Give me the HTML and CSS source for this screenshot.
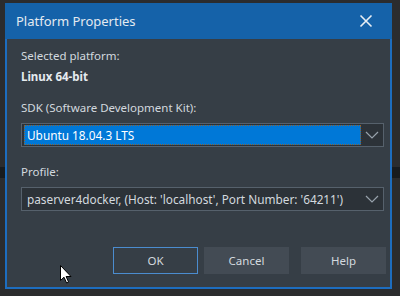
FILE: index.html
```html
<html>
  <head>
    <link rel="stylesheet" href="styles.css">
  </head>
  <body>
    <div class="dialog">
      <div class="titlebar">
        <span class="title">Platform Properties</span>
        <svg class="close" width="14" height="14" viewBox="0 0 14 14">
          <path d="M1.5 1.5 L12.5 12.5 M12.5 1.5 L1.5 12.5" stroke="#e8eef4" stroke-width="1.6" fill="none"/>
        </svg>
      </div>
      <div class="content">
        <div class="label">Selected platform:</div>
        <div class="value">Linux 64-bit</div>

        <div class="label sdk-label">SDK (Software Development Kit):</div>
        <div class="combo">
          <div class="combo-text selected">Ubuntu 18.04.3 LTS</div>
          <div class="combo-arrow">
            <svg width="14" height="8" viewBox="0 0 14 8"><path d="M1 1 L7 7 L13 1" stroke="#98a2ac" stroke-width="1.2" fill="none"/></svg>
          </div>
        </div>

        <div class="label profile-label">Profile:</div>
        <div class="combo">
          <div class="combo-text">paserver4docker, (Host: 'localhost', Port Number: '64211')</div>
          <div class="combo-arrow">
            <svg width="14" height="8" viewBox="0 0 14 8"><path d="M1 1 L7 7 L13 1" stroke="#98a2ac" stroke-width="1.2" fill="none"/></svg>
          </div>
        </div>

        <div class="buttons">
          <button class="btn default">OK</button>
          <button class="btn">Cancel</button>
          <button class="btn help">Help</button>
        </div>
      </div>
    </div>

    <svg class="cursor" width="12" height="19" viewBox="0 0 12 19">
      <path d="M0.5 0.5 L0.5 15.5 L4 12.2 L6.6 18 L8.6 17.1 L6.1 11.5 L11 11.5 Z" fill="#ffffff" stroke="#000000" stroke-width="1"/>
    </svg>
  </body>
</html>
```

FILE: styles.css
```css
body {
  margin: 0;
  width: 400px;
  height: 296px;
  overflow: hidden;
  background: linear-gradient(to bottom, #2b2c2e 167px, #181b1e 167px, #181b1e 178px, #2b2c2e 178px);
  font-family: "Noto Sans", sans-serif;
  font-size: 11.5px;
  color: #d3d9df;
  position: relative;
}

.dialog {
  margin: 3px 0 0 5px;
  width: 383px;
  height: 284px;
  border: 2px solid #1d6dbf;
  border-top: 0;
  background: #363e46;
  display: flex;
  flex-direction: column;
}

.titlebar {
  height: 36px;
  margin: 0 -2px;
  background: #1562a9;
  display: flex;
  align-items: center;
  justify-content: space-between;
  padding: 0 19px 0 11px;
}

.title {
  font-size: 13px;
  color: #e4eaf0;
}

.close {
  display: block;
}

.content {
  flex: 1;
  padding: 9px 6px 0 14px;
  display: flex;
  flex-direction: column;
}

.label {
  line-height: 16px;
}

.value {
  font-weight: bold;
  line-height: 16px;
  margin-top: 5px;
  color: #e6ebf0;
}

.sdk-label {
  margin-top: 15px;
}

.combo {
  margin-top: 7px;
  height: 24px;
  box-sizing: border-box;
  border: 1px solid #56616c;
  background: #2c3238;
  display: flex;
  align-items: stretch;
}

.combo-text {
  flex: 1;
  font-size: 11.8px;
  line-height: 20px;
  padding-left: 3px;
  margin: 1px 0 1px 2px;
  white-space: nowrap;
  overflow: hidden;
}

.combo-text.selected {
  background: #0078d7;
  color: #ffffff;
  outline: 1px dotted #8a6236;
  outline-offset: -1px;
}

.combo-arrow {
  width: 22px;
  display: flex;
  align-items: center;
  justify-content: center;
}

.profile-label {
  margin-top: 17px;
}

.buttons {
  margin-top: auto;
  margin-bottom: 13px;
  margin-right: -2px;
  display: flex;
  justify-content: flex-end;
}

.btn {
  width: 85px;
  height: 27px;
  margin-left: 6px;
  border: 1px solid transparent;
  background: #434b54;
  color: #d3d9df;
  font-family: "Noto Sans", sans-serif;
  font-size: 11.5px;
}

.btn.default {
  background: #363e46;
  border-color: #4b8ccf;
}

.btn.help {
  margin-left: 12px;
}

.cursor {
  position: absolute;
  left: 60px;
  top: 265px;
}
```
